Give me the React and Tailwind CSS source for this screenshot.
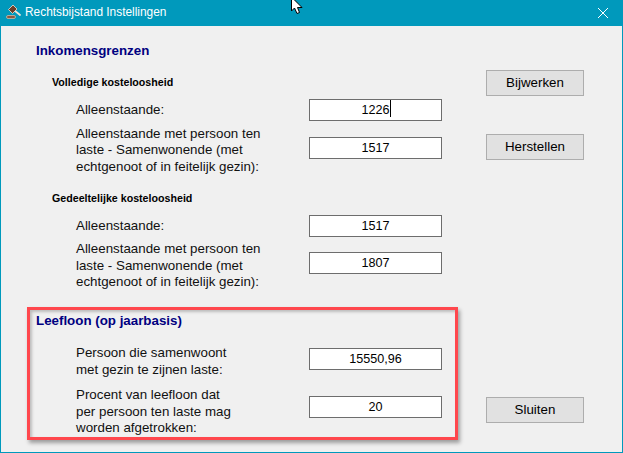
const FONT = "font-['Liberation_Sans',Arial,sans-serif]"

function Gavel() {
  return (
    <svg width="18" height="18" viewBox="0 0 18 18" className="shrink-0">
      <rect x="1.5" y="11.5" width="9" height="3" rx="1.5" fill="#8a5a42" stroke="#d9c4b2" strokeWidth="0.7" />
      <path d="M9.5 6.5l5.5 4.5" stroke="#efe3d6" strokeWidth="1.8" strokeLinecap="round" />
      <path d="M3.5 5.5l4.5-4.5 4 4-4.5 4.5z" fill="#6b3f2a" stroke="#f0e0d0" strokeWidth="0.8" />
    </svg>
  )
}

function MouseCursor() {
  return (
    <svg width="13" height="15" viewBox="0 0 13 15" className="absolute left-[290px] top-0">
      <path d="M0.5 -3V11L3.5 8L6 13.5L8.5 12.5L6.5 7.5H11z" fill="#fff" stroke="#000" strokeWidth="1" />
    </svg>
  )
}

function Field({ value, caret, className = '' }) {
  return (
    <div className={`w-[133px] h-[22px] shrink-0 bg-white border border-[#6d6d6d] flex items-center justify-center text-[12.6px] text-black ${className}`}>
      <span className="relative">
        {value}
        {caret && <span className="absolute -right-[1px] -top-[1px] w-px h-[17px] bg-black" />}
      </span>
    </div>
  )
}

function Row({ lines, value, caret, className = '', fieldClass = '' }) {
  return (
    <div className={`flex ml-[75px] ${className}`}>
      <div className="w-[233px] shrink-0 text-[13.33px] leading-[16.4px] text-[#111]">
        {lines.map(l => <div key={l}>{l}</div>)}
      </div>
      <Field value={value} caret={caret} className={fieldClass} />
    </div>
  )
}

function PushButton({ label, className = '' }) {
  return (
    <button className={`w-[98px] h-[26px] bg-[#e1e1e1] border border-[#adadad] text-[13.33px] text-black ${className}`}>
      {label}
    </button>
  )
}

export default function App() {
  return (
    <div className={`relative w-[623px] h-[453px] overflow-hidden flex flex-col bg-[#f0f0f0] border border-t-0 border-[#0099bc] ${FONT}`}>
      <div className="h-[26px] shrink-0 bg-[#0099bc] flex items-center pl-[4px] pr-[13px] text-white text-[11.9px]">
        <Gavel />
        <span className="ml-[2px]">Rechtsbijstand Instellingen</span>
        <svg width="12" height="12" viewBox="0 0 12 12" className="ml-auto" fill="none" stroke="#fff" strokeWidth="1">
          <path d="M1 1l10 10M11 1L1 11" />
        </svg>
      </div>

      <div className="flex flex-1">
        <div className="w-[485px] shrink-0">
          <h1 className="mt-[17px] ml-[35px] text-[13.33px] leading-4 font-bold text-[#000080]">Inkomensgrenzen</h1>
          <h2 className="mt-[15px] ml-[51px] text-[10.67px] leading-4 font-bold text-black">Volledige kosteloosheid</h2>
          <Row className="mt-[9px] items-center" lines={['Alleenstaande:']} value="1226" caret />
          <Row className="mt-[5px]" fieldClass="mt-[11px]" lines={['Alleenstaande met persoon ten', 'laste - Samenwonende (met', 'echtgenoot of in feitelijk gezin):']} value="1517" />
          <h2 className="mt-[15px] ml-[51px] text-[10.67px] leading-4 font-bold text-black">Gedeeltelijke kosteloosheid</h2>
          <Row className="mt-[9px] items-center" lines={['Alleenstaande:']} value="1517" />
          <Row className="mt-[4px]" fieldClass="mt-[11px]" lines={['Alleenstaande met persoon ten', 'laste - Samenwonende (met', 'echtgenoot of in feitelijk gezin):']} value="1807" />
          <h1 className="mt-[23px] ml-[35px] text-[13.33px] leading-4 font-bold text-[#000080]">Leefloon (op jaarbasis)</h1>
          <Row className="mt-[16px]" fieldClass="mt-[3px]" lines={['Persoon die samenwoont', 'met gezin te zijnen laste:']} value="15550,96" />
          <Row className="mt-[9px]" fieldClass="mt-[9px]" lines={['Procent van leefloon dat', 'per persoon ten laste mag', 'worden afgetrokken:']} value="20" />
        </div>
        <div className="flex flex-col pt-[44px]">
          <PushButton label="Bijwerken" />
          <PushButton label="Herstellen" className="mt-[38px]" />
          <PushButton label="Sluiten" className="mt-[237px]" />
        </div>
      </div>

      {/* annotation drawn over the screenshot */}
      <div className="absolute left-[26px] top-[307px] w-[431px] h-[133px] border-[3px] border-[#ff474d] shadow-[2px_3px_4px_rgba(0,0,0,0.35),inset_2px_2px_3px_rgba(0,0,0,0.22)]" />
      <MouseCursor />
    </div>
  )
}
